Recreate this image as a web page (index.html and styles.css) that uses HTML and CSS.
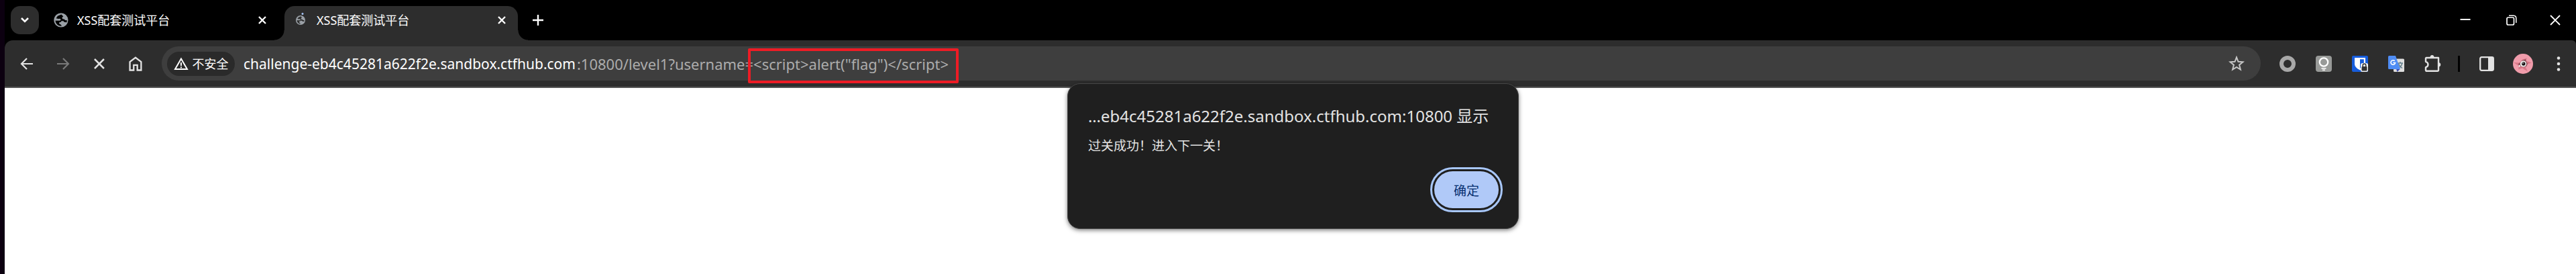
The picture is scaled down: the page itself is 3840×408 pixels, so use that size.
FILE: index.html
```html
<!DOCTYPE html>
<html lang="zh-CN">
<head>
<meta charset="utf-8">
<title>XSS配套测试平台</title>
<link rel="stylesheet" href="styles.css">
</head>
<body>
<div class="window">
  <header class="tabstrip">
    <button class="tab-search" aria-label="搜索标签页">
      <svg width="14" height="10" viewBox="0 0 14 10"><path d="M2 2l5 5 5-5" fill="none" stroke="#fff" stroke-width="2.6"/></svg>
    </button>
    <div class="tab">
      <svg class="favicon" width="22" height="22" viewBox="0 0 22 22"><circle cx="11" cy="11" r="10.6" fill="#9aa0a6"/><path d="M11.500 2.400L6 4.800 3.600 8.200l3.400.9 2.500-.4 1.300 1.700-1.600 1.400H2.400A8.700 8.700 0 0 0 11 19.700l1-.1-1.500-2.200-2.400-1.200.3-2 2.500-.5.6-1.400h2.800l1.800 1.600 3.500.4.100-3.300-2.200.2-1.600-1.500-2.900-.6-.5-2 1.900-1.700z" fill="#000"/></svg>
      <span class="tab-title">XSS配套测试平台</span>
      <button class="tab-close" aria-label="关闭"><svg width="14" height="14" viewBox="0 0 14 14"><path d="M2 2l10 10M12 2L2 12" stroke="#fff" stroke-width="2.4"/></svg></button>
    </div>
    <div class="tab tab-active">
      <span class="favicon favicon-loading">
        <svg width="14" height="22" viewBox="0 0 14 22"><circle cx="7" cy="11" r="7" fill="#9aa0a6"/><path d="M7.500 5.300L4 6.800 2.300 9l2.300.6 1.600-.3.8 1.100-1 .9H1.500A5.600 5.600 0 0 0 7 16.600l-1-1.700-1.200-.8.2-1.200 1.600-.3.500-.9h1.700l1.200 1 2.400.2V11l-1.500.1-1-1-1.900-.4-.3-1.300 1.200-1.100z" fill="#2d2d2d"/><circle cx="10" cy="1.500" r="1.500" fill="#a8c7fa"/></svg>
      </span>
      <span class="tab-title">XSS配套测试平台</span>
      <button class="tab-close" aria-label="关闭"><svg width="14" height="14" viewBox="0 0 14 14"><path d="M2 2l10 10M12 2L2 12" stroke="#fff" stroke-width="2.4"/></svg></button>
    </div>
    <button class="new-tab" aria-label="新标签页"><svg width="16" height="16" viewBox="0 0 16 16"><path d="M8 0v16M0 8h16" stroke="#fff" stroke-width="2.4"/></svg></button>
    <div class="caption">
      <button aria-label="最小化"><svg width="16" height="16" viewBox="0 0 16 16"><path d="M.5 7h15" stroke="#fff" stroke-width="2"/></svg></button>
      <button aria-label="还原"><svg width="16" height="16" viewBox="0 0 16 16"><rect x="1" y="4" width="10.5" height="11" rx="2" fill="none" stroke="#fff" stroke-width="1.7"/><path d="M4 1.200h7a4 4 0 0 1 3.800 4V12" fill="none" stroke="#fff" stroke-width="1.5"/></svg></button>
      <button aria-label="关闭窗口"><svg width="16" height="16" viewBox="0 0 16 16"><path d="M1 1l14 14M15 1L1 15" stroke="#fff" stroke-width="1.9"/></svg></button>
    </div>
  </header>

  <nav class="toolbar">
    <div class="nav-buttons">
      <button aria-label="后退"><svg width="20" height="20" viewBox="0 0 20 20"><path d="M19 10H3M10 2l-8 8 8 8" fill="none" stroke="#e3e3e3" stroke-width="2.2"/></svg></button>
      <button aria-label="前进" disabled><svg width="20" height="20" viewBox="0 0 20 20"><path d="M1 10h16M10 2l8 8-8 8" fill="none" stroke="#7a7a7a" stroke-width="2.2"/></svg></button>
      <button aria-label="停止"><svg width="18" height="18" viewBox="0 0 18 18"><path d="M2 2l14 14M16 2L2 16" stroke="#e3e3e3" stroke-width="2.5"/></svg></button>
      <button aria-label="主页"><svg width="20" height="22" viewBox="0 0 20 22"><path d="M1.600 20.500V8L10 1.800 18.400 8v12.500h-5.700v-7.700H7.300v7.700z" fill="none" stroke="#e3e3e3" stroke-width="2.3"/></svg></button>
    </div>
    <div class="omnibox">
      <button class="site-info">
        <svg width="22" height="20" viewBox="0 0 22 20"><path d="M11 2.600L20 18H2z" fill="none" stroke="#fff" stroke-width="2"/><path d="M11 8v5M11 14.200v2" stroke="#fff" stroke-width="1.9"/></svg>
        <span>不安全</span>
      </button>
      <label class="url-host" for="url-path">challenge-eb4c45281a622f2e.sandbox.ctfhub.com</label>
      <input class="url-path" id="url-path" type="text" value=":10800/level1?username=&lt;script&gt;alert(&quot;flag&quot;)&lt;/script&gt;">
      <button class="star" aria-label="为此标签页添加书签"><svg width="24" height="24" viewBox="0 0 24 24"><path d="M12 2.300l2.500 6.500 7 .5-5.400 4.400 1.800 6.900L12 16.900l-5.900 3.700 1.800-6.900L2.500 9.300l7-.5z" fill="none" stroke="#c7c7c7" stroke-width="2"/></svg></button>
      <span class="highlight"></span>
    </div>
    <div class="extensions">
      <button aria-label="扩展程序 1"><svg width="24" height="24" viewBox="0 0 24 24"><circle cx="12" cy="12" r="9" fill="none" stroke="#a8a8a8" stroke-width="6"/></svg></button>
      <button aria-label="扩展程序 2"><svg width="24" height="24" viewBox="0 0 24 24"><rect width="24" height="24" rx="4" fill="#989a98"/><circle cx="12" cy="9.5" r="6.2" fill="none" stroke="#fff" stroke-width="2.3"/><path d="M8.500 18.700h7M10 21.300h4" stroke="#fff" stroke-width="1.5"/></svg></button>
      <button aria-label="Bitwarden"><svg width="24" height="24" viewBox="0 0 24 24"><rect width="24" height="24" rx="2" fill="#175ddc"/><path d="M4 3h16v9c0 5-5 8-8 9.500C9 20 4 17 4 12z" fill="#fff"/><path d="M12 5.200h5.800V12c0 3-3 5-5.800 6.700z" fill="#175ddc"/><rect x="13" y="11" width="11" height="13" rx="2.5" fill="#f1f3f4"/><rect x="14.500" y="16" width="8" height="6.5" rx="1" fill="#333"/><path d="M16.200 16v-1.600a2.300 2.300 0 0 1 4.600 0V16" fill="none" stroke="#333" stroke-width="1.5"/></svg></button>
      <button aria-label="Google 翻译"><svg width="24" height="24" viewBox="0 0 24 24"><rect x="8" y="4.500" width="16" height="19.5" rx="1.5" fill="#dedede"/><path d="M14 11h8M18 9v2M21 11c-.7 3-2.500 5.500-6 7.500M15.500 12c1 3 3 5 5.500 6.500" fill="none" stroke="#607d8b" stroke-width="1.4"/><path d="M12 19.500h6L13.500 24z" fill="#3949ab"/><path d="M1.500 0H11l7 20H1.500A1.500 1.500 0 0 1 0 18.500v-17A1.500 1.500 0 0 1 1.500 0z" fill="#4f8df5"/><path d="M9.800 7.800a3.300 3.300 0 1 0 .8 2.700H7.300" fill="none" stroke="#fff" stroke-width="1.6"/></svg></button>
      <button aria-label="扩展程序"><svg width="26" height="26" viewBox="0 0 26 26"><path d="M3.500 4H22v18.500a1.300 1.300 0 0 1-1.300 1.300H4.500A1.300 1.300 0 0 1 3 22.500v-4.300c4.600-1.200 4.600-7.200 0-8.400V4.500z" fill="none" stroke="#e3e3e3" stroke-width="2.4" stroke-linejoin="round"/><path d="M9.500 3.500a3 3.500 0 0 1 6 0zM22.500 11a3.300 3.300 0 0 1 0 6.500z" fill="#e3e3e3"/></svg></button>
    </div>
    <span class="divider"></span>
    <div class="profile">
      <button aria-label="侧边栏"><svg width="22" height="22" viewBox="0 0 22 22"><rect x="1.200" y="1.200" width="19.6" height="19.6" rx="2" fill="none" stroke="#e3e3e3" stroke-width="2.3"/><path d="M13 1h6.500A1.500 1.500 0 0 1 21 2.500v17a1.500 1.500 0 0 1-1.500 1.500H13z" fill="#e3e3e3"/></svg></button>
      <button aria-label="个人资料"><svg width="30" height="30" viewBox="0 0 30 30"><circle cx="15" cy="15" r="15" fill="#f09cab"/><path d="M1 13l9 .5 4-5 7-2-2 4 9 3-7 2-2 5 3 6-8-5-6 2 1-5z" fill="#d87888"/><path d="M8 15l3-2 3-3 5-2 1 4 2 3-2 4-4 1-4-1-3 1z" fill="#8d4f59"/><circle cx="15.5" cy="15" r="4.6" fill="#f3f1f1"/><circle cx="15.8" cy="15" r="2.7" fill="#1a1416"/><circle cx="15" cy="14" r=".8" fill="#fff"/><path d="M8 18l2-1.500 1.500 2L9.500 20z" fill="#f5e7e8"/></svg></button>
      <button aria-label="更多"><svg width="6" height="24" viewBox="0 0 6 24"><g fill="#e3e3e3"><circle cx="3" cy="3.5" r="2.3"/><circle cx="3" cy="12" r="2.3"/><circle cx="3" cy="20.5" r="2.3"/></g></svg></button>
    </div>
  </nav>

  <main class="page"></main>

  <div class="dialog-layer">
    <section class="dialog" role="alertdialog" aria-labelledby="dialog-title" aria-describedby="dialog-text">
      <h1 class="dialog-title" id="dialog-title">…eb4c45281a622f2e.sandbox.ctfhub.com:10800 显示</h1>
      <p class="dialog-text" id="dialog-text">过关成功！进入下一关！</p>
      <button class="dialog-ok">确定</button>
    </section>
  </div>
</div>
</body>
</html>
```

FILE: styles.css
```css
* { box-sizing: border-box; }

body {
  margin: 0;
  padding-left: 7px;
  background: #0c0010;
  font-family: "Noto Sans", "Noto Sans CJK SC", sans-serif;
}

button {
  display: flex;
  align-items: center;
  justify-content: center;
  margin: 0;
  padding: 0;
  border: 0;
  background: none;
  color: inherit;
  font: inherit;
}

svg { display: block; flex: none; }

.window {
  position: relative;
  display: flex;
  flex-direction: column;
  min-height: 100vh;
  background: #000;
}

/* Tab strip */
.tabstrip {
  display: flex;
  height: 60px;
  padding: 9px 0 0 9px;
  color: #fff;
}

.tab-search {
  width: 42px;
  height: 42px;
  border-radius: 14px;
  background: #2d2d2d;
}

.tab {
  display: flex;
  align-items: center;
  width: 348px;
  height: 51px;
  margin-left: 18px;
  padding: 0 23px 9px 4px;
}

.favicon { width: 22px; margin-right: 13px; }

.favicon-loading { padding-left: 4px; }

.tab-title {
  flex: 1;
  font-size: 18px;
  line-height: 24px;
  white-space: nowrap;
}

.tab-close { width: 20px; height: 20px; }

.tab-active {
  position: relative;
  margin-left: 0;
  padding-right: 14px;
  padding-left: 13px;
  border-radius: 15px 15px 0 0;
  background: #2d2d2d;
}

.tab-active::before,
.tab-active::after {
  content: "";
  position: absolute;
  bottom: 0;
  width: 15px;
  height: 15px;
}

.tab-active::before {
  right: 100%;
  background: radial-gradient(circle at 0 0, transparent 14px, #2d2d2d 15px);
}

.tab-active::after {
  left: 100%;
  background: radial-gradient(circle at 100% 0, transparent 14px, #2d2d2d 15px);
}

.new-tab { width: 60px; height: 42px; }

.caption { display: flex; margin-left: auto; }

.caption button { width: 69px; height: 42px; }

.caption button:last-child { width: 62px; }

/* Toolbar */
.toolbar {
  display: flex;
  align-items: center;
  height: 71px;
  border-bottom: 2px solid #565656;
  border-radius: 12px 6px 0 0;
  background: #2d2d2d;
}

.nav-buttons { display: flex; padding: 0 12px 0 6px; }

.nav-buttons button { width: 54px; height: 50px; }

.omnibox {
  position: relative;
  display: flex;
  flex: 1;
  align-items: center;
  height: 51px;
  padding: 0 24px 0 8px;
  border-radius: 26px;
  background: #3e3e3e;
}

.site-info {
  gap: 6px;
  width: 101px;
  height: 36px;
  border-radius: 18px;
  background: #2a2a2a;
  color: #fff;
  font-size: 18px;
  line-height: 24px;
}

.url-host {
  margin-left: 13px;
  color: #fff;
  font-size: 21px;
  line-height: 30px;
  white-space: nowrap;
}

.url-path {
  flex: 1;
  min-width: 0;
  height: 30px;
  margin-left: 2px;
  padding: 0;
  border: 0;
  outline: 0;
  background: none;
  color: #acacac;
  font-family: inherit;
  font-size: 22px;
}

.highlight {
  position: absolute;
  top: 3px;
  left: 874px;
  width: 314px;
  height: 52px;
  border: 4px solid #ee1c25;
  border-radius: 2px;
}

.extensions { display: flex; padding-left: 13px; }

.extensions button,
.profile button { width: 54px; height: 50px; }

.divider { width: 3px; height: 24px; margin: 0 13px 0 11px; background: #000; }

.profile { display: flex; }

.profile button:last-child { width: 52px; }

/* Page and alert */
.page { flex: 1; background: #fff; }

.dialog-layer {
  position: absolute;
  top: 124px;
  left: 8px;
  right: 0;
  display: flex;
  justify-content: center;
}

.dialog {
  display: flex;
  flex-direction: column;
  width: 673px;
  padding: 30px 29px 30px 30px;
  border: 1px solid #474747;
  border-radius: 19px;
  background: #1f1f1f;
  box-shadow: 0 2px 6px rgba(0, 0, 0, 0.5);
  color: #e3e3e3;
}

.dialog-title {
  margin: 0;
  font-size: 24px;
  font-weight: 400;
  line-height: 36px;
  white-space: nowrap;
}

.dialog-text {
  margin: 12px 0 24px;
  font-size: 19px;
  line-height: 28px;
}

.dialog-ok {
  align-self: flex-end;
  width: 96px;
  height: 55px;
  border-radius: 28px;
  outline: 3px solid #a8c7fa;
  outline-offset: 3px;
  background: #b0c9f8;
  color: #062e6f;
  font-size: 19px;
}
```
